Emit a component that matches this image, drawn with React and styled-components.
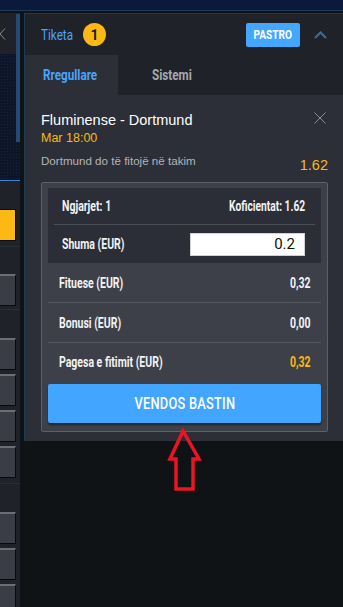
import React from "react";
import styled, { createGlobalStyle } from "styled-components";

const GlobalStyle = createGlobalStyle`
  html, body {
    margin: 0;
    padding: 0;
    background: #0f1316;
    font-family: "Liberation Sans", Arial, sans-serif;
  }
  * { box-sizing: border-box; }
`;

const cond = `Roboto, "Liberation Sans", sans-serif`;

// the site uses a condensed face; Roboto squeezed horizontally stands in for it
const Cond = styled.span`
  display: inline-block;
  white-space: nowrap;
  font-family: ${cond};
  transform: scaleX(${(p) => p.s || 0.78});
  transform-origin: ${(p) => p.origin || "left"} center;
`;

const Page = styled.div`
  width: 343px;
  height: 607px;
  overflow: hidden;
  background: #0f1316;
  display: flex;
  flex-direction: column;
`;

const TopBar = styled.div`
  height: 11px;
  flex-shrink: 0;
  background: #0b1a3c;
  border-bottom: 1px solid #23395a;
`;

const Body = styled.div`
  flex: 1;
  display: flex;
  padding-top: 2px;
  gap: 4px;
`;

/* ---- left rail (neighbouring column, cut off) ---- */

const Rail = styled.div`
  position: relative;
  width: 20px;
  flex-shrink: 0;
  background: #1c1f25;
  display: flex;
  flex-direction: column;
`;

const RailHead = styled.div`
  height: 41px;
  background: #1f2229;
  display: flex;
  align-items: center;
`;

const RailPattern = styled.div`
  height: 127px;
  background-color: #0d1528;
  background-image: radial-gradient(#162342 0.6px, transparent 0.8px);
  background-size: 3px 3px;
  border-bottom: 1px solid #3f83d8;
`;

const ScrollThumb = styled.div`
  position: absolute;
  left: 16px;
  top: 1px;
  width: 4px;
  height: 128px;
  background: #284a72;
`;

const RailSection = styled.div`
  display: flex;
  flex-direction: column;
  gap: 4px;
  padding-top: ${(p) => p.top}px;
  height: ${(p) => p.h}px;
  border-bottom: 1px solid #2a2d34;
  background: #1f2229;
`;

const RailBox = styled.div`
  width: 16px;
  height: 32px;
  flex-shrink: 0;
  background: ${(p) => (p.yellow ? "#fdb913" : "#3a3d45")};
  border: 1px solid #08090b;
  border-top: ${(p) => (p.yellow ? "1px solid #08090b" : "2px solid #6b6e74")};
  border-left: none;
`;

/* ---- bet slip ---- */

const Main = styled.div`
  position: relative;
  flex: 1;
  display: flex;
  flex-direction: column;
`;

const Slip = styled.div`
  background: #2c2f37;
  border-top: 1px solid #1d3c52;
  border-left: 1px solid #1d3c52;
  padding-bottom: 9px;
`;

const SlipHeader = styled.div`
  height: 41px;
  background: #1f2229;
  display: flex;
  align-items: center;
  padding: 0 16px 0 16px;
`;

const Title = styled(Cond)`
  font-size: 15px;
  color: #4aa3ff;
`;

const CountBadge = styled.span`
  width: 23px;
  height: 23px;
  border-radius: 50%;
  background: #fdb913;
  color: #1b1b1b;
  font-family: ${cond};
  font-weight: 700;
  font-size: 14px;
  display: flex;
  align-items: center;
  justify-content: center;
  margin-left: 1px;
`;

const ClearButton = styled.button`
  margin-left: auto;
  height: 24px;
  width: 54px;
  border: none;
  border-radius: 2px;
  background: #43a6ff;
  color: #fff;
  font-weight: 700;
  font-size: 13px;
  padding: 0;
  display: flex;
  align-items: center;
  justify-content: center;
`;

const Collapse = styled.span`
  display: flex;
  margin-left: 14px;
`;

const Tabs = styled.div`
  display: flex;
  height: 40px;
  background: #1f2229;
`;

const Tab = styled.div`
  width: ${(p) => (p.active ? "93px" : "auto")};
  padding-left: ${(p) => (p.active ? "18px" : "34px")};
  display: flex;
  align-items: center;
  background: ${(p) => (p.active ? "#2c2f37" : "transparent")};
  color: ${(p) => (p.active ? "#4aa3ff" : "#a7a9ae")};
  font-weight: 700;
  font-size: 15px;
`;

const SlipBody = styled.div`
  padding: 16px 15px 0 16px;
`;

const MatchRow = styled.div`
  display: flex;
  justify-content: space-between;
  align-items: flex-start;
`;

const MatchName = styled.div`
  color: #fff;
  font-size: 14.5px;
  line-height: 18px;
`;

const MatchTime = styled.div`
  color: #fdb913;
  font-size: 12.5px;
  line-height: 15px;
  margin-top: 2px;
`;

const CloseIcon = styled.span`
  display: flex;
  margin-top: 1px;
  margin-right: 2px;
`;

const PickRow = styled.div`
  display: flex;
  justify-content: space-between;
  align-items: flex-end;
  margin-top: 7px;
`;

const PickText = styled.div`
  color: #b2b4b9;
  font-size: 11.6px;
  line-height: 16px;
`;

const PickOdd = styled.div`
  color: #fdb913;
  font-size: 14.5px;
  line-height: 16px;
  margin-bottom: -4px;
`;

const Summary = styled.div`
  margin-top: 13px;
  background: #3d4048;
  border: 1px solid #5d6067;
  border-radius: 2px;
  padding: 5px 6px 8px 6px;
`;

const StakeBox = styled.div`
  background: #2b2e36;
  padding: 0 6px;
`;

const StakeRow = styled.div`
  display: flex;
  align-items: center;
  justify-content: space-between;
  height: ${(p) => p.h}px;
  padding: 0 10px 0 8px;
  border-bottom: ${(p) => (p.divided ? "1px solid #4b4e55" : "none")};
`;

const Label = styled(Cond)`
  font-weight: 700;
  font-size: 14px;
  color: ${(p) => p.color || "#f2f3f5"};
`;

const StakeInput = styled.input`
  width: 115px;
  height: 23px;
  border: 1px solid #cfd1d4;
  background: #fff;
  text-align: right;
  padding: 0 9px;
  font-family: ${cond};
  font-size: 15px;
  color: #111;
  outline: none;
`;

const InfoRow = styled.div`
  display: flex;
  align-items: center;
  justify-content: space-between;
  height: ${(p) => p.h}px;
  padding: 0 10px 0 11px;
  border-bottom: ${(p) => (p.divided ? "1px solid #55585f" : "none")};
`;

const PlaceBet = styled.button`
  width: 100%;
  height: 39px;
  margin-top: 4px;
  border: none;
  border-radius: 2px;
  background: #42a5ff;
  box-shadow: 0 2px 2px rgba(0, 0, 0, 0.45);
  color: #fff;
  font-weight: 500;
  font-size: 16px;
  letter-spacing: 0.3px;
  display: flex;
  align-items: center;
  justify-content: center;
`;

const Annotation = styled.svg`
  position: absolute;
  left: 142px;
  top: 415px;
`;

const railBoxes = (n) =>
  Array.from({ length: n }, (_, i) => <RailBox key={i} />);

export default function App() {
  return (
    <Page>
      <GlobalStyle />
      <TopBar />
      <Body>
        <Rail>
          <RailHead>
            <svg width="6" height="12" viewBox="0 0 6 12">
              <path d="M5 0.5 L0 6 L5 11.5" stroke="#8a8d93" strokeWidth="1" fill="none" />
            </svg>
          </RailHead>
          <RailPattern />
          <ScrollThumb />
          <RailSection top={28} h={66}>
            <RailBox yellow />
          </RailSection>
          <RailSection top={27} h={63}>
            {railBoxes(1)}
          </RailSection>
          <RailSection top={28} h={174}>
            {railBoxes(4)}
          </RailSection>
          <RailSection top={28} h={140}>
            {railBoxes(3)}
          </RailSection>
        </Rail>

        <Main>
          <Slip>
            <SlipHeader>
              <Title>Tiketa</Title>
              <CountBadge>1</CountBadge>
              <ClearButton>
                <Cond origin="center">PASTRO</Cond>
              </ClearButton>
              <Collapse>
                <svg width="13" height="8" viewBox="0 0 13 8">
                  <path d="M1 7 L6.5 1.5 L12 7" stroke="#3e6c9c" strokeWidth="2" fill="none" />
                </svg>
              </Collapse>
            </SlipHeader>
            <Tabs>
              <Tab active>
                <Cond>Rregullare</Cond>
              </Tab>
              <Tab>
                <Cond>Sistemi</Cond>
              </Tab>
            </Tabs>
            <SlipBody>
              <MatchRow>
                <div>
                  <MatchName>Fluminense - Dortmund</MatchName>
                  <MatchTime>Mar 18:00</MatchTime>
                </div>
                <CloseIcon>
                  <svg width="12" height="12" viewBox="0 0 12 12">
                    <path d="M0.5 0.5 L11.5 11.5 M11.5 0.5 L0.5 11.5" stroke="#8d9096" strokeWidth="1" />
                  </svg>
                </CloseIcon>
              </MatchRow>
              <PickRow>
                <PickText>Dortmund do të fitojë në takim</PickText>
                <PickOdd>1.62</PickOdd>
              </PickRow>

              <Summary>
                <StakeBox>
                  <StakeRow h={37} divided>
                    <Label s={0.75}>Ngjarjet: 1</Label>
                    <Label s={0.73} origin="right">Koficientat: 1.62</Label>
                  </StakeRow>
                  <StakeRow h={38}>
                    <Label s={0.75}>Shuma (EUR)</Label>
                    <StakeInput defaultValue="0.2" />
                  </StakeRow>
                </StakeBox>
                <InfoRow h={40} divided>
                  <Label s={0.75}>Fituese (EUR)</Label>
                  <Label s={0.75} origin="right">0,32</Label>
                </InfoRow>
                <InfoRow h={40} divided>
                  <Label s={0.75}>Bonusi (EUR)</Label>
                  <Label s={0.75} origin="right">0,00</Label>
                </InfoRow>
                <InfoRow h={37}>
                  <Label s={0.75}>Pagesa e fitimit (EUR)</Label>
                  <Label s={0.75} origin="right" color="#fdb913">
                    0,32
                  </Label>
                </InfoRow>
                <PlaceBet>
                  <Cond origin="center" s={0.8}>
                    VENDOS BASTIN
                  </Cond>
                </PlaceBet>
              </Summary>
            </SlipBody>
          </Slip>
          <Annotation width="40" height="64" viewBox="0 0 40 64">
            <path
              d="M17 3 L4 31 L10 31 L10 61 L27 61 L27 31 L33 31 Z"
              stroke="#ea1520"
              strokeWidth="3.5"
              strokeLinejoin="miter"
              fill="none"
            />
          </Annotation>
        </Main>
      </Body>
    </Page>
  );
}
